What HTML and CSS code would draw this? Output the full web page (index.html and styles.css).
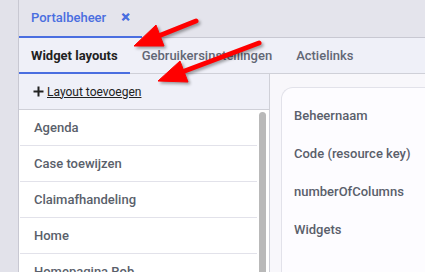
FILE: index.html
```html
<!DOCTYPE html>
<html lang="nl">
<head>
    <meta charset="UTF-8">
    <title>Portalbeheer</title>
    <link rel="stylesheet" href="styles.css">
</head>
<body>
    <div class="app">
        <div class="side-strip"></div>
        <div class="main">
            <div class="topbar">
                <div class="doc-tab">
                    <span>Portalbeheer</span>
                    <span class="close">&#x2715;</span>
                </div>
            </div>
            <div class="tabs">
                <div class="tab active">Widget layouts</div>
                <div class="tab">Gebruikersinstellingen</div>
                <div class="tab">Actielinks</div>
            </div>
            <div class="content">
                <div class="left-panel">
                    <div class="add-row">
                        <svg class="plus" width="11" height="11" viewBox="0 0 11 11">
                            <path d="M5.5 0.5v10M0.5 5.5h10" stroke="#222" stroke-width="2"/>
                        </svg>
                        <a class="add-link">Layout toevoegen</a>
                    </div>
                    <div class="list-wrap">
                        <ul class="layout-list">
                            <li>Agenda</li>
                            <li>Case toewijzen</li>
                            <li>Claimafhandeling</li>
                            <li>Home</li>
                            <li>Homepagina Rob</li>
                            <li>Overzicht</li>
                            <li>Relatiebeheer</li>
                            <li>Taken</li>
                            <li>Werkvoorraad</li>
                        </ul>
                        <div class="scrollbar">
                            <div class="scroll-thumb"></div>
                        </div>
                    </div>
                </div>
                <div class="right-panel">
                    <div class="card">
                        <div class="field">Beheernaam</div>
                        <div class="field">Code (resource key)</div>
                        <div class="field">numberOfColumns</div>
                        <div class="field">Widgets</div>
                    </div>
                </div>
            </div>
        </div>
    </div>

    <!-- rode pijlen (annotatie) -->
    <svg class="arrows" width="425" height="272" viewBox="0 0 425 272">
        <g fill="#ff0000" stroke="#ff0000">
            <line x1="196" y1="21" x2="156" y2="37" stroke-width="5" stroke-linecap="round"/>
            <polygon points="134,46 156,25 164,46" stroke-width="1" stroke-linejoin="round"/>
            <line x1="259" y1="43" x2="182" y2="72" stroke-width="5" stroke-linecap="round"/>
            <polygon points="158,81 180,61 188,82" stroke-width="1" stroke-linejoin="round"/>
        </g>
    </svg>
</body>
</html>
```

FILE: styles.css
```css
html, body {
    margin: 0;
    height: 100%;
    overflow: hidden;
}
body {
    font-family: Roboto, "Liberation Sans", sans-serif;
    font-size: 13px;
    color: #222;
    position: relative;
}
.app {
    display: flex;
    height: 480px;
}
.side-strip {
    width: 18px;
    background-color: #e2e2ea;
    border-right: 1px solid #c8c8d2;
}
.main {
    flex: 1;
    display: flex;
    flex-direction: column;
    min-width: 0;
}
.topbar {
    height: 37px;
    background-color: #e4e4ec;
    border-bottom: 1px solid #c8c8d2;
    display: flex;
}
.doc-tab {
    width: 123px;
    box-sizing: border-box;
    padding: 0 12px;
    display: flex;
    align-items: center;
    gap: 15px;
    color: #4a6ee0;
    font-weight: 500;
    border-bottom: 2px solid #4a6ee0;
    margin-bottom: -1px;
    padding-bottom: 2px;
}
.close {
    font-size: 11px;
    font-weight: 900;
    -webkit-text-stroke: 0.6px #4a6ee0;
}
.tabs {
    height: 35px;
    background-color: #eff0f8;
    border-bottom: 1px solid #cfd0d8;
    display: flex;
}
.tab {
    padding: 0 12px;
    display: flex;
    align-items: center;
    color: #626775;
    font-weight: 500;
}
.tab.active {
    color: #222;
    font-weight: 700;
    border-bottom: 2px solid #4a6ee0;
    margin-bottom: -1px;
    padding-top: 1px;
}
.content {
    flex: 1;
    display: flex;
    min-height: 0;
}
.left-panel {
    width: 250px;
    border-right: 1px solid #cfd0d8;
    display: flex;
    flex-direction: column;
    background-color: #fff;
}
.add-row {
    height: 35px;
    background-color: #eff0f8;
    border-bottom: 1px solid #cfd0d8;
    display: flex;
    align-items: center;
    padding-left: 14px;
    gap: 3px;
}
.add-link {
    text-decoration: underline;
    color: #222;
    font-size: 12px;
}
.list-wrap {
    flex: 1;
    min-height: 0;
    display: flex;
}
.layout-list {
    list-style: none;
    margin: 0;
    padding: 0;
    flex: 1;
    overflow: hidden;
}
.scrollbar {
    width: 10px;
    padding-top: 2px;
    box-sizing: border-box;
}
.scroll-thumb {
    width: 7px;
    height: 300px;
    background-color: #b9b9b9;
    border-radius: 4px 4px 0 0;
}
.layout-list li {
    height: 35px;
    line-height: 35px;
    margin: 0 2px 0 1px;
    padding-left: 14px;
    border-bottom: 1px solid #e2e2ea;
    color: #5a5f6b;
    font-weight: 500;
}
.right-panel {
    flex: 1;
    background-color: #f8f7fb;
    padding: 13px 0 0 11px;
}
.card {
    background-color: #fdfcff;
    border: 1px solid #e2e2ea;
    border-right: none;
    border-radius: 12px 0 0 0;
    padding: 9px 0 0 12px;
    height: 400px;
}
.field {
    height: 38px;
    line-height: 38px;
    color: #5a5f6b;
    font-weight: 500;
}
.arrows {
    position: absolute;
    left: 0;
    top: 0;
    pointer-events: none;
    filter: drop-shadow(2px 2px 1.5px rgba(0, 0, 0, 0.35));
}
```
